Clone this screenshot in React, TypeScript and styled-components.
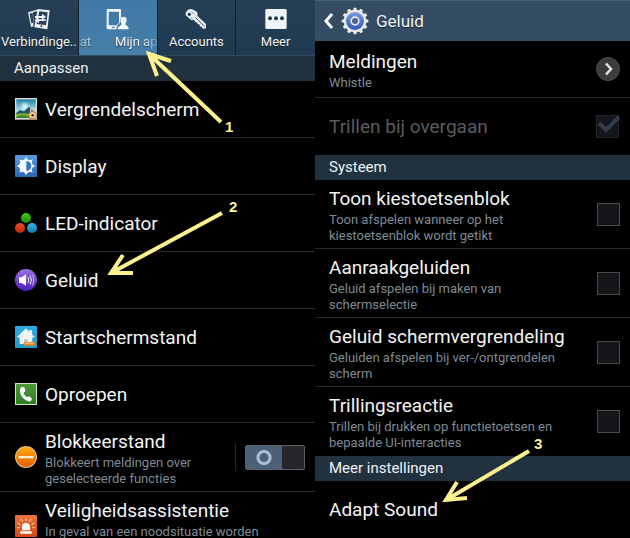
import React from 'react';
import styled, { createGlobalStyle, css } from 'styled-components';

const GlobalStyle = createGlobalStyle`
  *, *::before, *::after { box-sizing: border-box; }
  body {
    margin: 0;
    background: #000;
    color: #f4f4f4;
    font-family: Roboto, "Liberation Sans", sans-serif;
  }
  button, input { font: inherit; color: inherit; margin: 0; }
`;

/* ---------- layout ---------- */

const Page = styled.main`
  position: relative;
  display: grid;
  grid-template-columns: 1fr 1fr;
  height: 100vh;
  overflow: hidden;
`;

const Panel = styled.section`
  display: flex;
  flex-direction: column;
  min-width: 0;
`;

const Tabs = styled.nav`
  display: grid;
  grid-template-columns: repeat(4, 1fr);
  border-bottom: 1px solid #35495a;
`;

const Tab = styled.button<{ $active?: boolean }>`
  display: flex;
  flex-direction: column;
  align-items: center;
  min-width: 0;
  height: 55px;
  padding: 8px 0 5px;
  border: 0;
  border-right: 1px solid #14202b;
  background: ${(p) => (p.$active ? 'linear-gradient(#4179a6, #477fab)' : 'linear-gradient(#263f57, #1f3a50)')};
  &:last-child { border-right: 0; }
  svg { flex: none; }
`;

const TabLabel = styled.span`
  max-width: 100%;
  font-size: 13px;
  line-height: 20px;
  white-space: nowrap;
  text-shadow: 0 1px 1px rgba(0, 0, 0, 0.6);
`;

const Marquee = styled(TabLabel)`
  display: flex;
  gap: 24px;
  width: 100%;
  padding-left: 1px;
  overflow: hidden;
  mask-image: linear-gradient(90deg, rgba(0, 0, 0, 0.4), #000 30%, #000 82%, rgba(0, 0, 0, 0.2));
`;

const SectionTitle = styled.h2`
  margin: 0;
  padding: 0 14px;
  font-size: 15px;
  font-weight: 400;
  line-height: 25px;
  background: #22313e;
  color: #eef1f4;
`;

const AppBar = styled.header`
  display: flex;
  align-items: center;
  gap: 7px;
  height: 41px;
  padding: 0 8px;
  background: #344d64;
  border-top: 1px solid #47617a;
`;

const BackButton = styled.button`
  display: flex;
  padding: 0;
  border: 0;
  background: none;
`;

const AppTitle = styled.h1`
  margin: 0;
  font-size: 17px;
  font-weight: 400;
  line-height: 24px;
  text-shadow: 0 1px 1px rgba(0, 0, 0, 0.5);
`;

const rowStyle = css`
  display: flex;
  align-items: center;
  width: 100%;
  min-height: 57px;
  border: 0;
  border-bottom: 1px solid #2b2b2b;
  background: none;
  text-align: left;
`;

const menuRowStyle = css`
  ${rowStyle}
  gap: 8px;
  padding: 4px 10px 4px 15px;
  svg { flex: none; }
`;

const MenuRow = styled.button`
  ${menuRowStyle}
`;

const SwitchRow = styled.label`
  ${menuRowStyle}
`;

const optionRowStyle = css<{ $last?: boolean }>`
  ${rowStyle}
  padding: 4px 10px 4px 14px;
  ${(p) => p.$last && 'border-bottom-color: transparent;'}
`;

const OptionRow = styled.label<{ $last?: boolean }>`
  ${optionRowStyle}
`;

const LinkRow = styled.button<{ $last?: boolean }>`
  ${optionRowStyle}
`;

const RowText = styled.span`
  display: flex;
  flex: 1;
  flex-direction: column;
  align-items: flex-start;
  min-width: 0;
  padding-top: 2px;
`;

const RowTitle = styled.span<{ $dim?: boolean }>`
  font-size: 19px;
  line-height: 26px;
  white-space: nowrap;
  color: ${(p) => (p.$dim ? '#5c5c5c' : '#f4f4f4')};
`;

const RowNote = styled.span<{ $lines?: number }>`
  min-height: ${(p) => (p.$lines ?? 1) * 16}px;
  font-size: 13px;
  line-height: 16px;
  white-space: pre-line;
  color: #7f8b93;
`;

/* ---------- controls ---------- */

const CheckBox = styled.input.attrs({ type: 'checkbox' })`
  flex: none;
  appearance: none;
  width: 23px;
  height: 23px;
  border: 1px solid #4b4b4d;
  background: #15161a;
`;

const TickWrap = styled.span`
  display: grid;
  flex: none;
  > * { grid-area: 1 / 1; }
  ${CheckBox} { border-color: #22252b; background: #13161b; }
`;

const SwitchSlot = styled.span`
  display: flex;
  align-items: center;
  height: 28px;
  padding-left: 9px;
  border-left: 1px solid #262626;
`;

const Switch = styled.input.attrs({ type: 'checkbox', role: 'switch' })`
  appearance: none;
  display: flex;
  width: 60px;
  height: 25px;
  border: 1px solid #5d6064;
  border-radius: 2px;
  background: #26272c;
  &::before {
    content: '';
    width: 36px;
    background: radial-gradient(circle at 50% 50%, transparent 4px, #a9c0da 5px, #a9c0da 7px, transparent 8px), #4b6276;
  }
`;

/* ---------- annotations lying over the panels ---------- */

const Arrow = styled.svg<{ $x: number; $y: number }>`
  position: absolute;
  left: ${(p) => p.$x}px;
  top: ${(p) => p.$y}px;
  pointer-events: none;
  fill: none;
  stroke: #fdf08e;
  stroke-width: 4;
`;

const Step = styled.span<{ $x: number; $y: number }>`
  position: absolute;
  left: ${(p) => p.$x}px;
  top: ${(p) => p.$y}px;
  font: bold 15px/16px "Liberation Sans", Arial, sans-serif;
  color: #fdf08e;
  pointer-events: none;
`;

/* ---------- icons ---------- */

const TabIcon = ({ children }: { children: React.ReactNode }) => (
  <svg width="24" height="24" viewBox="0 0 72 72" aria-hidden="true">{children}</svg>
);

const ConnectionsIcon = () => (
  <TabIcon>
    <path d="M3 13 L30 5 L33 9 L18 13 L20 55 L12 58Z" fill="#dfe6ec" />
    <path d="M8 17 L17 14 L19 44 L13 46Z" fill="#2a4259" />
    <path d="M22 9 L37 4 L37 10Z" fill="#eef2f5" />
    <path d="M32 3 L68 7 L61 64 L22 58Z" fill="#eef2f5" />
    <path d="M37 10 L62 13 L57 52 L29 48Z" fill="#2a4259" />
    <path d="M24 24 H45 V17 L57 27 L45 35 V30 H24Z M56 39 H36 V46 L22 36 L36 31 V34 H56Z" fill="#eef2f5" />
    <circle cx="43" cy="55" r="3" fill="#2a4259" />
  </TabIcon>
);

const DeviceIcon = () => (
  <TabIcon>
    <path fillRule="evenodd" d="M5 3 H42 Q45 3 45 6 V29 Q39 35 42 44 Q33 48 31 64 H5 Q2 64 2 61 V6 Q2 3 5 3Z M8 11 V52 H32 Q34 47 39 44 V11Z M17 56 V60 H26 V56Z" fill="#f2f6fa" />
    <path d="M53 26 C65 26 63 42 58 47 C58 53 68 52 68 64 H35 C35 53 47 53 47 47 C42 42 41 26 53 26Z" fill="#f2f6fa" />
  </TabIcon>
);

const KeyIcon = () => (
  <TabIcon>
    <path fillRule="evenodd" d="M8 10 Q14 1 25 4 L38 11 Q43 16 40 23 L66 48 L66 61 L57 63 L53 56 L48 56 L46 49 L41 49 L39 43 L34 43 L30 35 Q23 39 19 34 L5 22 Q2 16 8 10Z M16 14 A5 5 0 1 0 16 24 A5 5 0 1 0 16 14Z" fill="#e8edf1" />
    <path d="M34 28 L61 55" stroke="#536575" strokeWidth="3" />
    <path d="M22 12 L32 18 M20 30 L27 34" stroke="#91a0ad" strokeWidth="3" />
  </TabIcon>
);

const MoreIcon = () => (
  <TabIcon>
    <rect x="4" y="3" width="64" height="60" rx="4" fill="#f0f3f6" />
    <circle cx="18" cy="31" r="6" fill="#20384d" />
    <circle cx="36" cy="31" r="6" fill="#20384d" />
    <circle cx="54" cy="31" r="6" fill="#20384d" />
  </TabIcon>
);

const RowIcon = ({ children }: { children: React.ReactNode }) => (
  <svg width="22" height="22" viewBox="0 0 66 66" aria-hidden="true">{children}</svg>
);

const LockScreenIcon = () => (
  <RowIcon>
    <defs>
      <linearGradient id="sky" x2="0" y2="1"><stop stopColor="#1c7fa6" /><stop offset="0.6" stopColor="#a8dfe6" /></linearGradient>
      <radialGradient id="sun"><stop stopColor="#fff" /><stop offset="1" stopColor="#bdebf2" stopOpacity="0" /></radialGradient>
    </defs>
    <rect width="66" height="65" fill="#d5dad9" />
    <rect x="4" y="4" width="58" height="56" fill="url(#sky)" />
    <circle cx="30" cy="26" r="18" fill="url(#sun)" />
    <path d="M4 44 L15 36 L27 40 L41 27 L62 44 V50 H4Z" fill="#25566c" />
    <path d="M4 48 Q28 42 62 50 V60 H4Z" fill="#79b32c" />
    <path d="M4 56 Q26 48 46 60 H4Z" fill="#3f8220" />
    <path d="M47 43 V36 A7 7 0 0 1 60 36 V43" fill="none" stroke="#d8d1c2" strokeWidth="4" />
    <circle cx="53" cy="52" r="13" fill="#bd8740" />
    <circle cx="53" cy="52" r="9" fill="#f0d9ad" />
    <circle cx="53" cy="52" r="4" fill="#46301b" />
  </RowIcon>
);

const rays = [0, 45, 90, 135, 180, 225, 270, 315];

const DisplayIcon = () => (
  <RowIcon>
    <defs><linearGradient id="disp" x2="0" y2="1"><stop stopColor="#5a9be0" /><stop offset="1" stopColor="#2768b2" /></linearGradient></defs>
    <rect width="66" height="66" rx="2" fill="url(#disp)" />
    {rays.map((a) => <path key={a} d="M27 16 L33 5 L39 16Z" fill="#f4f8fc" transform={`rotate(${a} 33 33)`} />)}
    <circle cx="33" cy="33" r="20" fill="#f4f8fc" />
    <path d="M34 18 A15 15 0 0 1 34 48Z" fill="#3476bf" />
  </RowIcon>
);

const LedIcon = () => (
  <RowIcon>
    <defs>
      <linearGradient id="lg" x2="0" y2="1"><stop stopColor="#42c51a" /><stop offset="1" stopColor="#208f0a" /></linearGradient>
      <linearGradient id="lr" x2="0" y2="1"><stop stopColor="#f05025" /><stop offset="1" stopColor="#bd260b" /></linearGradient>
      <linearGradient id="lb" x2="0" y2="1"><stop stopColor="#39b5e4" /><stop offset="1" stopColor="#0f7db4" /></linearGradient>
    </defs>
    <circle cx="33" cy="18" r="15" fill="url(#lg)" />
    <circle cx="15" cy="48" r="15" fill="url(#lr)" />
    <circle cx="51" cy="48" r="15" fill="url(#lb)" />
  </RowIcon>
);

const SoundIcon = () => (
  <RowIcon>
    <defs><linearGradient id="snd" x2="0" y2="1"><stop stopColor="#9a73e3" /><stop offset="1" stopColor="#4b1fb8" /></linearGradient></defs>
    <circle cx="33" cy="33" r="33" fill="url(#snd)" />
    <path d="M12 25 H20 L33 16 V50 L20 42 H12Z" fill="#fff" />
    <path d="M39 25 Q43 33 39 42 M45 20 Q54 33 45 46" fill="none" stroke="#efe8ff" strokeWidth="3" />
    <path d="M51 16 Q62 33 51 50" fill="none" stroke="#c9b5f2" strokeWidth="3" />
  </RowIcon>
);

const HomeIcon = () => (
  <RowIcon>
    <defs><linearGradient id="home" x2="0" y2="1"><stop stopColor="#2babde" /><stop offset="1" stopColor="#2299cd" /></linearGradient></defs>
    <rect width="66" height="66" rx="2" fill="url(#home)" />
    <path d="M33 7 L43 17 V12 H51 V25 L60 34 H52 V54 H14 V34 H5Z" fill="#eef2f3" />
    <path d="M27 40 H38 V54 H27Z" fill="#b5c5cc" />
    <rect x="26" y="48" width="34" height="11" rx="4" fill="#e48b24" />
    <path d="M30 52 H56" stroke="#ffc574" strokeWidth="3" />
  </RowIcon>
);

const CallIcon = () => (
  <RowIcon>
    <defs><linearGradient id="call" x2="0" y2="1"><stop stopColor="#4b9b3a" /><stop offset="1" stopColor="#2f7f20" /></linearGradient></defs>
    <rect width="66" height="66" fill="#d3e3cd" />
    <rect x="3" y="3" width="60" height="60" fill="url(#call)" />
    <path d="M20 12 L28 12 L31 25 L25 30 Q28 38 36 43 L42 39 L51 47 L47 55 Q38 57 28 49 Q14 36 15 20 Q16 14 20 12Z" fill="#fff" />
  </RowIcon>
);

const BlockIcon = () => (
  <RowIcon>
    <defs><linearGradient id="blk" x2="0" y2="1"><stop stopColor="#ffab08" /><stop offset="1" stopColor="#e35f08" /></linearGradient></defs>
    <circle cx="33" cy="33" r="33" fill="#d8b98b" />
    <circle cx="33" cy="33" r="30" fill="url(#blk)" />
    <rect x="11" y="30" width="44" height="7" fill="#fff0d3" />
  </RowIcon>
);

const AlarmIcon = () => (
  <RowIcon>
    <defs><linearGradient id="alm" x2="0" y2="1"><stop stopColor="#ea7440" /><stop offset="1" stopColor="#d34812" /></linearGradient></defs>
    <rect width="66" height="66" rx="2" fill="url(#alm)" />
    <path d="M21 46 V36 A12 12 0 0 1 45 36 V46Z M16 49 H50 V56 H16Z" fill="#fff" />
    <path d="M33 18 V10 M23 20 L18 12 M43 20 L48 12 M16 29 L8 24 M50 29 L58 24 M14 38 H7 M52 38 H59" stroke="#ffe2cf" strokeWidth="3" />
  </RowIcon>
);

const GearIcon = () => (
  <svg width="28" height="28" viewBox="0 0 84 84" aria-hidden="true">
    <defs><linearGradient id="gear" x2="0" y2="1"><stop stopColor="#7d9be0" /><stop offset="1" stopColor="#2f57b8" /></linearGradient></defs>
    {[0, 30, 60, 90, 120, 150, 180, 210, 240, 270, 300, 330].map((a) => (
      <path key={a} d="M35 14 L38 2 H46 L49 14Z" fill="#ece9e6" transform={`rotate(${a} 42 42)`} />
    ))}
    <circle cx="42" cy="42" r="34" fill="#e9e6e3" />
    <circle cx="42" cy="42" r="27" fill="url(#gear)" />
    <circle cx="42" cy="42" r="14" fill="#e9e6e3" />
    <circle cx="42" cy="42" r="9" fill="#4a678e" />
  </svg>
);

const BackIcon = () => (
  <svg width="11" height="18" viewBox="0 0 11 18" aria-hidden="true">
    <path d="M9 2 L3 9 L9 16" fill="none" stroke="#fff" strokeWidth="3" />
  </svg>
);

const MoreCircle = () => (
  <svg width="24" height="24" viewBox="0 0 48 48" aria-hidden="true">
    <circle cx="24" cy="24" r="23" fill="#3c3c3c" stroke="#4d4d4d" strokeWidth="2" />
    <path d="M20 13 L30 24 L20 35" fill="none" stroke="#e6e6e6" strokeWidth="5" />
  </svg>
);

const Tick = () => (
  <svg width="24" height="23" viewBox="0 0 24 23" aria-hidden="true">
    <path d="M3 8 L10 15 L23 2" fill="none" stroke="#343d49" strokeWidth="4" />
  </svg>
);

/* ---------- content ---------- */

const menu = [
  { title: 'Vergrendelscherm', Icon: LockScreenIcon },
  { title: 'Display', Icon: DisplayIcon },
  { title: 'LED-indicator', Icon: LedIcon },
  { title: 'Geluid', Icon: SoundIcon },
  { title: 'Startschermstand', Icon: HomeIcon },
  { title: 'Oproepen', Icon: CallIcon },
];

const options = [
  { title: 'Toon kiestoetsenblok', note: 'Toon afspelen wanneer op het\nkiestoetsenblok wordt getikt' },
  { title: 'Aanraakgeluiden', note: 'Geluid afspelen bij maken van\nschermselectie' },
  { title: 'Geluid schermvergrendeling', note: 'Geluiden afspelen bij ver-/ontgrendelen\nscherm' },
  { title: 'Trillingsreactie', note: 'Trillen bij drukken op functietoetsen en\nbepaalde UI-interacties' },
];

export default function App() {
  return (
    <>
      <GlobalStyle />
      <Page>
        <Panel>
          <Tabs>
            <Tab><ConnectionsIcon /><TabLabel>Verbindinge..</TabLabel></Tab>
            <Tab $active><DeviceIcon /><Marquee><span>at</span><span>Mijn ap</span></Marquee></Tab>
            <Tab><KeyIcon /><TabLabel>Accounts</TabLabel></Tab>
            <Tab><MoreIcon /><TabLabel>Meer</TabLabel></Tab>
          </Tabs>
          <SectionTitle>Aanpassen</SectionTitle>
          {menu.map(({ title, Icon }) => (
            <MenuRow key={title}>
              <Icon />
              <RowText><RowTitle>{title}</RowTitle></RowText>
            </MenuRow>
          ))}
          <SwitchRow>
            <BlockIcon />
            <RowText>
              <RowTitle>Blokkeerstand</RowTitle>
              <RowNote>{'Blokkeert meldingen over\ngeselecteerde functies'}</RowNote>
            </RowText>
            <SwitchSlot><Switch /></SwitchSlot>
          </SwitchRow>
          <MenuRow>
            <AlarmIcon />
            <RowText>
              <RowTitle>Veiligheidsassistentie</RowTitle>
              <RowNote $lines={2}>In geval van een noodsituatie worden</RowNote>
            </RowText>
          </MenuRow>
        </Panel>

        <Panel>
          <AppBar>
            <BackButton aria-label="Terug"><BackIcon /></BackButton>
            <GearIcon />
            <AppTitle>Geluid</AppTitle>
          </AppBar>
          <LinkRow>
            <RowText>
              <RowTitle>Meldingen</RowTitle>
              <RowNote>Whistle</RowNote>
            </RowText>
            <MoreCircle />
          </LinkRow>
          <OptionRow $last>
            <RowText><RowTitle $dim>Trillen bij overgaan</RowTitle></RowText>
            <TickWrap><CheckBox defaultChecked disabled /><Tick /></TickWrap>
          </OptionRow>
          <SectionTitle>Systeem</SectionTitle>
          {options.map(({ title, note }, i) => (
            <OptionRow key={title} $last={i === options.length - 1}>
              <RowText>
                <RowTitle>{title}</RowTitle>
                <RowNote>{note}</RowNote>
              </RowText>
              <CheckBox />
            </OptionRow>
          ))}
          <SectionTitle>Meer instellingen</SectionTitle>
          <LinkRow $last>
            <RowText><RowTitle>Adapt Sound</RowTitle></RowText>
          </LinkRow>
        </Panel>

        <Arrow $x={144} $y={49} width="80" height="76" aria-hidden="true">
          <path d="M77 73 L6 6 M13 27 L5 5 L27 12" />
        </Arrow>
        <Step $x={225} $y={119}>1</Step>
        <Arrow $x={103} $y={209} width="122" height="70" aria-hidden="true">
          <path d="M119 4 L8 64 M20 46 L8 64 L30 64" />
        </Arrow>
        <Step $x={229} $y={199}>2</Step>
        <Arrow $x={437} $y={447} width="96" height="60" aria-hidden="true">
          <path d="M92 4 L9 53 M20 35 L9 53 L30 51" />
        </Arrow>
        <Step $x={534} $y={436}>3</Step>
      </Page>
    </>
  );
}
